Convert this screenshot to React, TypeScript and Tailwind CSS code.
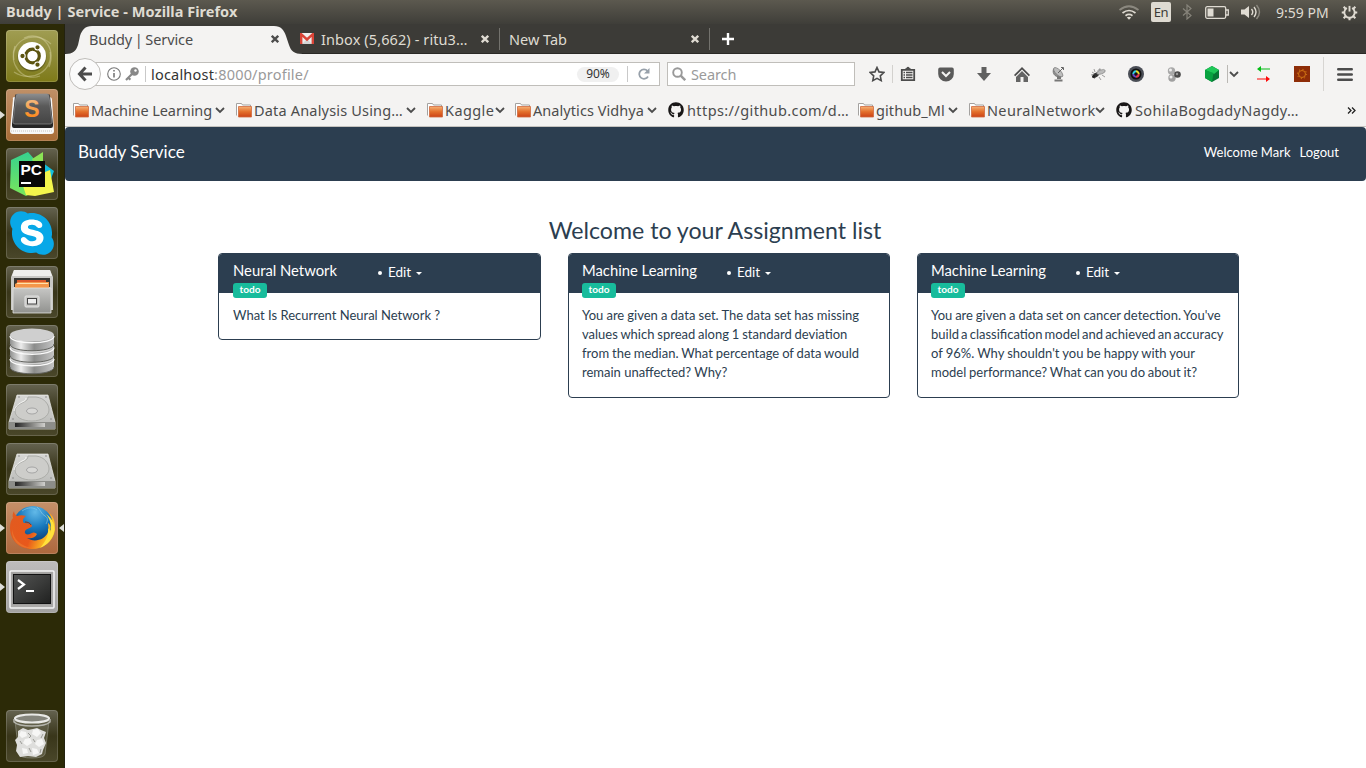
import React from "react";
import { FaGithub, FaSkype } from "react-icons/fa";

const ui = "font-['Noto_Sans','Open_Sans',sans-serif]";

/* ---------- launcher artwork, all on a 52x52 grid ---------- */

function UbuntuArt() {
  return (
    <svg viewBox="0 0 52 52" className="size-full">
      <g fill="none" stroke="#e0dcae" strokeOpacity=".4" strokeWidth="1.3">
        <path d="M8 30C4 12 26-2 45 14" />
        <path d="M18 8c17-8 33 9 25 29" />
        <path d="M44 22c4 18-18 32-36 20" />
        <path d="M34 46C16 52 2 34 9 16" />
      </g>
      <circle cx="26" cy="27" r="14.5" fill="#000" opacity=".25" />
      <circle cx="26" cy="26" r="14" fill="#fff" />
      <circle cx="26.5" cy="26" r="6.8" fill="none" stroke="#5c5410" strokeWidth="3.2" />
      <g fill="#5c5410" stroke="#fff" strokeWidth="1.1">
        <circle cx="16.5" cy="26" r="2.7" />
        <circle cx="31.5" cy="17.3" r="2.7" />
        <circle cx="31.5" cy="34.7" r="2.7" />
      </g>
    </svg>
  );
}

function SublimeArt() {
  return (
    <svg viewBox="0 0 52 52" className="size-full">
      <defs>
        <linearGradient id="subTop" x2="0" y2="1">
          <stop offset="0" stopColor="#8b8d8f" />
          <stop offset=".4" stopColor="#5a5a5a" />
          <stop offset="1" stopColor="#444" />
        </linearGradient>
        <linearGradient id="subS" x2="0" y2="1">
          <stop offset=".2" stopColor="#f4b678" />
          <stop offset="1" stopColor="#ff7d05" />
        </linearGradient>
      </defs>
      <path d="M7 10q-1-2 2-2h34q3 0 3 3l2 31q0 3-3 3H7q-3 0-3-3z" fill="#f7f7f7" />
      <path d="M5 42h42" stroke="#c5c2be" strokeDasharray="1 1" />
      <path d="M9 7q0-2 2-2h31q2 0 2 2l3 28v2q0 2-2 2H8q-2 0-2-2v-2z" fill="#252525" />
      <path d="M10 7q0-2 2-2h29q2 0 2 2l3 26q0 2-2 2H9q-2 0-2-2z" fill="url(#subTop)" stroke="#8c8d8e" strokeWidth=".7" />
      <text x="26" y="27.5" textAnchor="middle" fontFamily="Liberation Sans" fontWeight="700" fontSize="23" fill="url(#subS)">S</text>
    </svg>
  );
}

function PyCharmArt() {
  return (
    <svg viewBox="0 0 52 52" className="size-full">
      <defs>
        <linearGradient id="pcA" x2="0" y2="1"><stop offset="0" stopColor="#35d08f" /><stop offset="1" stopColor="#7ae65b" /></linearGradient>
      </defs>
      <path d="m5 12 17-8 8 9-6 33-4 2-16-8z" fill="url(#pcA)" />
      <path d="m26 11 11-7v12l-8 3z" fill="#8be455" />
      <path d="m37 15 11 8-5 13-9-3z" fill="#13bfdd" />
      <path d="m39 24 5-2 4 22-19 4-9-1-3-9z" fill="#f3f64c" />
      <rect x="13" y="13" width="26" height="26" fill="#080808" />
      <text x="14.5" y="27" fontFamily="Liberation Sans" fontWeight="700" fontSize="15.5" textLength="21.5" lengthAdjust="spacingAndGlyphs" fill="#fff">PC</text>
      <path d="M15 35h10" stroke="#fff" strokeWidth="2" />
    </svg>
  );
}

function SkypeArt() {
  return (
    <div className="relative size-full">
      <div className="absolute top-2 left-3 h-[36px] w-[30px] rounded-full bg-white" />
      <FaSkype className="absolute top-[1px] left-[1px] size-[50px] text-[#08a8e8]" />
    </div>
  );
}

function FilesArt() {
  return (
    <svg viewBox="0 0 52 52" className="size-full">
      <defs>
        <linearGradient id="cab" x2="0" y2="1">
          <stop offset="0" stopColor="#c6c6c4" />
          <stop offset="1" stopColor="#91928f" />
        </linearGradient>
      </defs>
      <path d="M8 4h36l3 7v33H5V11z" fill="#c9c9c6" />
      <path d="M8 4h36l2 6H6z" fill="#efefed" />
      <path d="M8 12h36v9H8z" fill="#383834" />
      <path d="M11 14h29v7H11z" fill="#dd5a2d" />
      <path d="M12 16h31v6H9v-4z" fill="#f4964a" />
      <path d="M11 17.5h31" stroke="#ffe1ae" />
      <path d="M7 22h38v25H7z" fill="url(#cab)" stroke="#e5e5e2" strokeWidth=".8" />
      <rect x="19" y="30" width="14" height="11" rx="1" fill="#c7c7c4" stroke="#e4e4e4" />
      <rect x="21.5" y="32.5" width="9" height="5.5" fill="#eee" stroke="#444" />
    </svg>
  );
}

function DatabaseArt() {
  return (
    <svg viewBox="0 0 52 52" className="size-full">
      <defs>
        <linearGradient id="dbg">
          <stop offset="0" stopColor="#8f908f" />
          <stop offset=".25" stopColor="#ececec" />
          <stop offset=".55" stopColor="#8b8c8b" />
          <stop offset="1" stopColor="#c4c4c4" />
        </linearGradient>
      </defs>
      {[33, 21.5, 10].map((y) => (
        <g key={y}>
          <path d={`M4 ${y}v9c0 9 44 9 44 0V${y}z`} fill="url(#dbg)" />
          <path d={`M4 ${y + 9}c0 9 44 9 44 0`} fill="none" stroke="#62635f" strokeWidth="1" />
          <path d={`M4 ${y + 1}c0 9 44 9 44 0`} fill="none" stroke="#fafafa" strokeWidth="1.3" />
          <ellipse cx="26" cy={y} rx="22" ry="6.5" fill="#cfcfcf" />
        </g>
      ))}
    </svg>
  );
}

function DiskArt() {
  return (
    <svg viewBox="0 0 52 52" className="size-full">
      <defs>
        <linearGradient id="disk" x2="0" y2="1">
          <stop offset="0" stopColor="#d7d7d5" />
          <stop offset="1" stopColor="#b8b9b6" />
        </linearGradient>
        <linearGradient id="diskFront">
          <stop offset="0" stopColor="#222" />
          <stop offset=".6" stopColor="#8b8b88" />
          <stop offset="1" stopColor="#d0d0cd" />
        </linearGradient>
      </defs>
      <path d="M11 11h31l7 27v7H3v-7z" fill="url(#disk)" stroke="#edede9" strokeWidth=".7" />
      <path d="M3 38h46v7H3z" fill="#8c8d89" />
      <path d="M9 39h30v4H9z" fill="url(#diskFront)" />
      <path d="M22 13h8c9 1 13 8 13 13 0 6-7 11-17 11S9 33 9 27c0-5 5-7 9-9 2-1 4-2 4-5z" fill="#cdcdca" stroke="#a7a8a4" strokeWidth=".9" />
      <path d="M20 14c0 2-1 3-4 4-5 3-7 5-8 9" fill="none" stroke="#f6f6f4" />
      <ellipse cx="26" cy="27" rx="5.5" ry="3" fill="#d8d8d6" stroke="#999" strokeWidth=".8" />
      <g fill="#777"><circle cx="13" cy="13" r=".7" /><circle cx="40" cy="13" r=".7" /><circle cx="7" cy="35" r=".7" /><circle cx="45" cy="35" r=".7" /></g>
    </svg>
  );
}

function FirefoxArt() {
  return (
    <svg viewBox="0 0 52 52" className="size-full">
      <defs>
        <radialGradient id="globe" cx=".55" cy=".15" r=".8">
          <stop offset="0" stopColor="#62b9e8" />
          <stop offset=".5" stopColor="#1779bd" />
          <stop offset="1" stopColor="#0a356f" />
        </radialGradient>
        <linearGradient id="fox" x2="1" y2=".3">
          <stop offset="0" stopColor="#e15b20" />
          <stop offset=".6" stopColor="#e8581b" />
          <stop offset="1" stopColor="#ffcf24" />
        </linearGradient>
      </defs>
      <circle cx="27" cy="24" r="20" fill="url(#globe)" />
      <path d="M31 5c4 3 4 7 8 9s2 6 1 8M16 9c6-4 11-4 15-1" stroke="#a6d9ee" strokeWidth="1" fill="none" opacity=".5" />
      <path d="M8 9c0 3 2 4 3 5 3-1 6-1 9 0-3 2-4 5-2 7 4 0 8 1 8 3-1 2-5 2-7 5-1 3 2 4 5 3 3-2 5-2 7 0-2 4-6 5-10 4 7 5 18 2 21-6 1-3 0-6 0-9 3 2 3 5 2 8 4-5 3-14-2-19 6 4 7 9 7 18-2 12-12 19-23 19C13 47 4 38 4 26c0-5 1-8 3-10-1-3 0-5 1-7z" fill="url(#fox)" />
      <path d="M40 12c7 5 9 11 8 18-2 8-7 13-14 16 6-7 9-13 8-20 2 2 3 5 2 7 2-8 1-15-4-21z" fill="#ffe13c" />
      <path d="M6 27c1 10 9 17 19 19C13 47 5 38 6 27z" fill="#ef8133" opacity=".6" />
      <path d="M19 20c3 0 5 1 6 3" stroke="#8e3016" fill="none" />
    </svg>
  );
}

function TerminalArt() {
  return (
    <svg viewBox="0 0 52 52" className="size-full">
      <defs>
        <linearGradient id="term" x2="1" y2="1">
          <stop offset="0" stopColor="#525352" />
          <stop offset=".5" stopColor="#3b3c3b" />
          <stop offset="1" stopColor="#202120" />
        </linearGradient>
      </defs>
      <rect x="4" y="10" width="44" height="37" rx="1" fill="#aaa9a7" stroke="#f4f4f4" strokeWidth="1.5" />
      <rect x="5.5" y="11.5" width="41" height="32.5" fill="#a2a19f" />
      <rect x="7.5" y="13.5" width="37" height="29" fill="url(#term)" stroke="#111" />
      <path d="m12 19 6 4.5-6 4.5M20 30h8" stroke="#fff" strokeWidth="2.2" fill="none" />
    </svg>
  );
}

function TrashArt() {
  return (
    <svg viewBox="0 0 52 52" className="size-full">
      <path d="m9 11 4 33q1 4 13 4t13-4l4-33z" fill="#b9b9a9" fillOpacity=".2" stroke="#8d8d7e" strokeWidth=".7" />
      <path d="m12 21 5-3 5 2 5-1 4-1 4 2 5 2-2 6 2 5-3 7-1 4-6 3-8-1-8 1-4-6 1-6-2-5 3-3z" fill="#dededc" />
      <g fill="#f6f6f5">
        <path d="m15 21 5 1 1 4-5 2-3-3zM27 20l5-1 3 4-4 4-5-3zM19 29l5-1 2 5-5 3-4-3zM31 30l5-1 2 5-5 3-4-3zM16 38l5 1 1 4-5 1zM26 38l5 1 2 4-6 2z" />
      </g>
      <path d="m22 23 3 3-2 2M37 24l-2 4M14 31l2 3M27 29l2 3M23 38l2 4M35 39l-1 4" stroke="#9b9b96" fill="none" />
      <ellipse cx="26" cy="8.5" rx="17" ry="4" fill="#85857c" stroke="#e9e9e6" strokeWidth="2.2" />
      <path d="M8 9v3q4 4 18 4t18-4V9" fill="none" stroke="#b5b5ad" strokeWidth="1.5" />
    </svg>
  );
}

const glass = "bg-linear-to-b from-[#656350] via-[#39361a] to-[#4a472a]";

const launcher = [
  { name: "Dash", art: <UbuntuArt />, tile: "bg-linear-to-b from-[#a09d52] to-[#7e7a17]", running: false },
  { name: "Sublime Text", art: <SublimeArt />, tile: "bg-linear-to-b from-[#bf9067] to-[#a86c35]", running: true },
  { name: "PyCharm", art: <PyCharmArt />, tile: glass, running: false },
  { name: "Skype", art: <SkypeArt />, tile: glass, running: false },
  { name: "Files", art: <FilesArt />, tile: glass, running: false },
  { name: "Database", art: <DatabaseArt />, tile: glass, running: false },
  { name: "Disk", art: <DiskArt />, tile: glass, running: false },
  { name: "Disk 2", art: <DiskArt />, tile: glass, running: false },
  { name: "Firefox", art: <FirefoxArt />, tile: "bg-linear-to-b from-[#c59069] to-[#ad683d]", running: true },
  { name: "Terminal", art: <TerminalArt />, tile: "bg-linear-to-b from-[#bebcbb] to-[#a3a2a1]", running: true },
];

function Tile({ art, tile, running, focused }: { art: React.ReactNode; tile: string; running?: boolean; focused?: boolean }) {
  return (
    <div className="relative flex h-[52px] justify-center">
      <div className={`ml-[-1px] size-[52px] overflow-hidden rounded-[4px] shadow-[inset_0_0_0_1px_rgba(255,255,255,0.16)] ${tile}`}>{art}</div>
      {running && (
        <svg viewBox="0 0 5 8" className="absolute top-[22px] left-0 h-2 w-[5px] fill-[#deded8]"><path d="m0 0 5 4-5 4z" /></svg>
      )}
      {focused && (
        <svg viewBox="0 0 5 8" className="absolute top-[22px] right-0 h-2 w-[5px] fill-[#deded8]"><path d="M5 0 0 4l5 4z" /></svg>
      )}
    </div>
  );
}

function Launcher() {
  return (
    <aside className="flex w-[65px] shrink-0 flex-col justify-between border-r border-[#23220f] bg-[#2c2a07] pt-1.5 pb-1.5">
      <div className="flex flex-col gap-[7px]">
        {launcher.map((l) => (
          <Tile key={l.name} art={l.art} tile={l.tile} running={l.running} focused={l.name === "Firefox"} />
        ))}
      </div>
      <Tile art={<TrashArt />} tile={glass} />
    </aside>
  );
}

/* ---------- system bar ---------- */

function SystemBar() {
  return (
    <header className="flex h-6 shrink-0 items-center justify-between bg-linear-to-b from-[#5c594f] to-[#3f3e39] pl-1.5 text-[#dfdbd2]">
      <span className="text-[14.5px] font-bold tracking-[0.03px]">Buddy | Service - Mozilla Firefox</span>
      <div className="flex w-[248px] items-center">
        <svg viewBox="0 0 22 16" className="mr-[11px] h-4 w-[22px] shrink-0" fill="none" strokeWidth="1.7">
          <path d="M1.5 6q9.5-7.5 19 0" stroke="#8b887f" />
          <path d="M4.5 9q6.5-5 13 0M7.5 11.7q3.5-2.6 7 0" stroke="#dfdbd2" />
          <path d="m8.8 13.5 2.2 2.3 2.2-2.3q-2.2-1.5-4.4 0z" fill="#dfdbd2" />
        </svg>
        <span className="flex h-5 w-5 shrink-0 items-center justify-center rounded-[2px] bg-[#dfdbd2] text-[13px] text-[#3c3b37]">
          <span className="pt-0.5 tracking-[-0.5px]">En</span>
        </span>
        <svg viewBox="0 0 10 16" className="ml-[11px] h-4 w-2.5 shrink-0" fill="none" stroke="#87847b" strokeWidth="1.2">
          <path d="m1 4.5 8 7-4 3.5V1l4 3.5-8 7" />
        </svg>
        <svg viewBox="0 0 24 13" className="ml-[13px] h-[13px] w-6 shrink-0" fill="none" stroke="#dfdbd2" strokeWidth="1.3">
          <rect x=".7" y=".7" width="20" height="11.6" rx="1.5" />
          <path d="M21 4h2.3v5H21" />
          <path d="M2.5 2.5h6v8h-6z" fill="#dfdbd2" stroke="none" />
        </svg>
        <svg viewBox="0 0 20 16" className="ml-3 h-4 w-5 shrink-0" fill="none" strokeWidth="1.4">
          <path d="M0 5.5h3.5L8 2v12l-4.5-3.5H0z" fill="#dfdbd2" />
          <path d="M10.5 5q2.5 3 0 6M13 3q4 5 0 10" stroke="#dfdbd2" />
          <path d="M15.5 1q6 7 0 14" stroke="#8b887f" />
        </svg>
        <span className="ml-[15px] w-[54px] shrink-0 text-[14px] whitespace-nowrap">9:59 PM</span>
        <svg viewBox="0 0 18 18" className="ml-[11px] size-[17px] shrink-0" fill="none" stroke="#dfdbd2">
          <path d="M6.200 4.300a5.500 5.500 0 1 0 5.600 0" strokeWidth="2" />
          <path d="M9 2v6" strokeWidth="2" />
          <path d="M2.800 2.800 5.500 5.500M.8 9h3M2.800 15.200l2.700-2.700M9 17.200v-3M15.200 15.200l-2.700-2.700M17.200 9h-3M15.200 2.800l-2.700 2.700" strokeWidth="2.2" />
        </svg>
      </div>
    </header>
  );
}

/* ---------- browser chrome ---------- */

function Close({ className }: { className: string }) {
  return (
    <svg viewBox="0 0 8 8" className={`size-2 shrink-0 ${className}`} stroke="currentColor" strokeWidth="2.3">
      <path d="m.8.8 6.400 6.400M7.200.8.8 7.200" />
    </svg>
  );
}

function TabBar() {
  return (
    <div className="relative flex h-[30px] shrink-0 items-center border-b border-[#2a2926] bg-[#3c3b37] text-[14.5px] text-[#dfdbd2]">
      <svg viewBox="0 0 240 28" className="absolute top-0.5 left-0 h-7 w-60">
        <path d="M0 28c8 0 11-3 13-9l2-9C17 4 20 0 27 0h182c7 0 10 4 12 10l3 9c2 6 5 9 14 9z" fill="#f4f3f2" />
      </svg>
      <div className="relative flex w-[227px] items-center pl-6 text-[#4c4c4c]">
        <span className="w-[182px] pt-0.5 tracking-[-0.1px] whitespace-nowrap [word-spacing:-1px]">Buddy | Service</span>
        <Close className="text-[#4c4c4c]" />
      </div>
      <div className="flex h-[22px] w-[208px] items-center border-r border-[#73726d] pl-2">
        <svg viewBox="0 0 14 11" className="h-[11px] w-3.5 shrink-0">
          <path d="M0 0h14v11H0z" fill="#efefef" />
          <path d="M2 11 7 6l5 5z" fill="#d5d5d5" />
          <path d="M1.200 11V1.200L7 6.500l5.800-5.300V11" fill="none" stroke="#da4437" strokeWidth="2.4" />
        </svg>
        <span className="ml-[7px] w-[160px] pt-0.5 tracking-[0.1px] whitespace-nowrap">Inbox (5,662) - ritu3…</span>
        <Close className="text-[#dfdbd2]" />
      </div>
      <div className="flex h-[22px] w-[210px] items-center border-r border-[#73726d] pl-[9px]">
        <span className="w-[182px] pt-0.5 whitespace-nowrap">New Tab</span>
        <Close className="text-[#dfdbd2]" />
      </div>
      <svg viewBox="0 0 12 12" className="ml-3 size-3" stroke="#fff" strokeWidth="2.4"><path d="M6 0v12M0 6h12" /></svg>
    </div>
  );
}

function Chevron({ className = "" }: { className?: string }) {
  return (
    <svg viewBox="0 0 10 7" className={`h-[7px] w-2.5 shrink-0 ${className}`} fill="none" stroke="#4c4c4c" strokeWidth="1.8">
      <path d="m1 1 4 4 4-4" />
    </svg>
  );
}

function Cell({ children }: { children: React.ReactNode }) {
  return <div className="flex w-[38px] shrink-0 justify-center">{children}</div>;
}

function ToolIcons() {
  return (
    <>
      <div className="flex w-8 shrink-0 justify-center pl-0.5">
        <svg viewBox="0 0 16 16" className="size-4" fill="none" stroke="#4c4c4c" strokeWidth="1.6">
          <path d="m8 1.500 2 4.400 4.800.6-3.500 3.300.9 4.800L8 12.300l-4.200 2.300.9-4.800L1.200 6.500 6 5.900z" />
        </svg>
      </div>
      <div className="h-[18px] w-px bg-[#d3d1ce]" />
      <div className="flex w-[34px] shrink-0 justify-center">
        <svg viewBox="0 0 16 16" className="ml-[-4px] size-4" fill="none" stroke="#4c4c4c">
          <path d="M1.800 3.800h12.400v10.400H1.800z" strokeWidth="1.8" />
          <path d="M5 3.500 8 1l3 2.500z" fill="#4c4c4c" />
          <path d="M3.500 6.500H5M6 6.500h6.500M3.500 9H5M6 9h6.500M3.500 11.500H5M6 11.500h6.500" strokeWidth="1.3" />
        </svg>
      </div>
      <Cell>
        <svg viewBox="0 0 16 15" className="h-[15px] w-4">
          <path d="M2 .5h12q1.800 0 1.800 2V7a7.800 7.500 0 0 1-15.600 0V2.500Q.2.500 2 .5z" fill="#5a5a5a" />
          <path d="m4 5 4 4 4-4" fill="none" stroke="#f4f3f2" strokeWidth="2" />
        </svg>
      </Cell>
      <Cell><svg viewBox="0 0 14 14" className="size-3.5" fill="#606060"><path d="M4.500 0h5v6H14l-7 8-7-8h4.500z" /></svg></Cell>
      <Cell><svg viewBox="0 0 16 15" className="h-[15px] w-4" fill="#4c4c4c"><path d="m8 0 8 8-1.200 1.200L8 2.500 1.200 9.200 0 8z" /><path d="m8 4 6 6v5H9.500v-5h-3v5H2v-5z" fill="#646464" /></svg></Cell>
      <Cell>
        <svg viewBox="0 0 14 16" className="mr-0.5 h-4 w-3.5">
          <path d="M1.500 3c-2 5 3 10 9 7z" fill="#8f8f8f" stroke="#666" strokeWidth=".6" />
          <ellipse cx="6.200" cy="6.200" rx="2.600" ry="6" transform="rotate(-45 6.200 6.200)" fill="#bdbdbd" stroke="#777" strokeWidth=".7" />
          <path d="m6 7 5-5M9 1.500h2.500V4" stroke="#666" fill="none" />
          <path d="M5 10v4h4v-3M2.500 13.500h8v2h-8z" fill="#777" />
        </svg>
      </Cell>
      <Cell>
        <svg viewBox="0 0 16 14" className="h-3.5 w-4">
          <path d="m2 5 3 2-4 1M4 12l2-3M9 10l2 3M12 8l3 2M5 5 4 2" stroke="#777" strokeWidth=".7" fill="none" />
          <ellipse cx="6" cy="8" rx="3.500" ry="2" transform="rotate(-35 6 8)" fill="#333" />
          <ellipse cx="11" cy="5" rx="4.500" ry="2" transform="rotate(-20 11 5)" fill="#bbb" stroke="#777" strokeWidth=".5" />
          <circle cx="3.500" cy="9.500" r="1.500" fill="#222" />
          <path d="m7 4 3-3 1 2z" fill="#999" />
        </svg>
      </Cell>
      <Cell>
        <svg viewBox="0 0 16 16" className="size-4">
          <circle cx="8" cy="8" r="8" fill="#4a4e56" /><circle cx="8" cy="8" r="5.500" fill="#111" />
          <g fill="none" strokeWidth="2">
            <path d="M5.300 8A2.700 2.700 0 0 1 8 5.300" stroke="#2fd1e3" />
            <path d="M8 5.300A2.700 2.700 0 0 1 10.700 8" stroke="#e1df2d" />
            <path d="M10.700 8A2.700 2.700 0 0 1 8 10.700" stroke="#e63b50" />
            <path d="M8 10.700A2.700 2.700 0 0 1 5.300 8" stroke="#6747c4" />
          </g>
        </svg>
      </Cell>
      <Cell>
        <svg viewBox="0 0 14 15" className="h-[15px] w-3.5">
          <circle cx="4.500" cy="4" r="3.700" fill="#a9a9a9" /><circle cx="3.500" cy="3" r="1.500" fill="#eee" />
          <circle cx="5" cy="11" r="3.700" fill="#a0a0a0" /><circle cx="4" cy="10" r="1.500" fill="#eee" />
          <circle cx="10.500" cy="7.500" r="3.300" fill="#4b4b4b" /><circle cx="10" cy="7" r="1.200" fill="#999" />
        </svg>
      </Cell>
      <Cell>
        <svg viewBox="0 0 14 16" className="h-4 w-3.5"><path d="m7 0 7 4v8l-7 4-7-4V4z" fill="#087735" /><path d="m7 0 7 4-5 4-9-4z" fill="#1fc758" /><path d="m0 4 8.500 3L7 16l-7-4z" fill="#08a240" /></svg>
      </Cell>
      <div className="ml-[-4px] h-[18px] w-px shrink-0 bg-[#bab8b4]" />
      <Chevron className="ml-[1px]" />
      <div className="flex w-[48px] shrink-0 justify-center">
        <svg viewBox="0 0 13 16" className="h-4 w-[13px]"><path d="M13 2.400v1.200H4V6L0 3l4-3v2.400z" fill="#04bd17" /><path d="M0 12.400v1.200h9V16l4-3-4-3v2.400z" fill="#fc0909" /></svg>
      </div>
      <div className="flex w-[29px] shrink-0 justify-center">
        <svg viewBox="0 0 16 16" className="size-4"><path d="M0 0h16v16H0z" fill="#8e2d08" /><circle cx="8" cy="8" r="3.500" fill="none" stroke="#df8517" strokeWidth=".8" /><circle cx="8" cy="8" r="4.600" fill="none" stroke="#df8517" strokeWidth="1" strokeDasharray="1 2.610" /></svg>
      </div>
      <div className="ml-[7px] h-[34px] w-px shrink-0 bg-[#d7d5d2]" />
      <svg viewBox="0 0 16 13" className="ml-[13px] h-[13px] w-4 shrink-0" stroke="#4c4c4c" strokeWidth="2.6" strokeLinecap="round"><path d="M1.300 1.300h13.400M1.300 6.500h13.400M1.300 11.700h13.400" /></svg>
    </>
  );
}

function NavBar() {
  return (
    <div className="flex h-10 shrink-0 items-center bg-[#f4f3f2] pl-1">
      <div className="z-10 flex size-[32px] shrink-0 items-center justify-center rounded-full border border-[#bfbdba] bg-[#fbfbfb]">
        <svg viewBox="0 0 16 16" className="size-4" fill="none" stroke="#4c4c4c" strokeWidth="3"><path d="M8.500 1.500 2.500 8l6 6.500M3 8h12" /></svg>
      </div>
      <div className="ml-[-16px] flex h-6 w-[575px] shrink-0 items-center border border-[#c0beba] bg-white pl-[21px]">
        <svg viewBox="0 0 14 14" className="size-3.5 shrink-0" fill="none" stroke="#777" strokeWidth="1.1"><circle cx="7" cy="7" r="6.300" /><path d="M7 6v4.500M7 3v1.500" strokeWidth="1.6" /></svg>
        <svg viewBox="0 0 14 14" className="ml-1 size-3.5 shrink-0" fill="none"><circle cx="9.500" cy="4.500" r="4.300" fill="#888" /><circle cx="10.500" cy="3.500" r="1.200" fill="#fff" /><path d="m7 7-6 6M4 11.500l1.500 1.200" stroke="#888" strokeWidth="2.2" /></svg>
        <div className="ml-[6px] h-4 w-px shrink-0 bg-[#c9c9c9]" />
        <span className="ml-[5px] w-[426px] shrink-0 pt-0.5 text-[14.5px] tracking-[0.2px] whitespace-nowrap text-[#9a9a9a]"><span className="text-[#333]">localhost</span>:8000/profile/</span>
        <span className="flex h-[15px] w-[42px] shrink-0 items-center justify-center rounded-full bg-[#f0f0f0] text-[12px] text-[#333]">90%</span>
        <div className="ml-2 h-4 w-px shrink-0 bg-[#c9c9c9]" />
        <svg viewBox="0 0 12 12" className="ml-[10px] size-3 shrink-0" fill="none" stroke="#97a0aa" strokeWidth="1.8"><path d="M10 8.500A4.700 4.700 0 1 1 9.500 3" /><path d="M11.500 0v5.500H6z" fill="#97a0aa" stroke="none" /></svg>
      </div>
      <div className="ml-[7px] flex h-6 w-[188px] shrink-0 items-center border border-[#c0beba] bg-white pl-1">
        <svg viewBox="0 0 14 14" className="size-3.5 shrink-0" fill="none" stroke="#999" strokeWidth="1.9"><circle cx="5.500" cy="5.500" r="4.300" /><path d="m8.700 8.700 4.500 4.500" strokeWidth="2.4" /></svg>
        <span className="ml-[5px] pt-0.5 text-[14.5px] tracking-[-0.1px] text-[#9a9a9a]">Search</span>
      </div>
      <div className="flex w-[505px] shrink-0 items-center pl-[5px]"><ToolIcons /></div>
    </div>
  );
}

function Folder() {
  return (
    <svg viewBox="0 0 17 15" className="mr-[1px] h-[15px] w-[17px] shrink-0">
      <defs><linearGradient id="fold" x2="0" y2="1"><stop offset="0" stopColor="#f6b175" /><stop offset=".5" stopColor="#e36f2b" /><stop offset="1" stopColor="#cc4216" /></linearGradient></defs>
      <path d="M.5 12.500V.5h5l1 1.500h8v2" fill="#fff" stroke="#a4a2a0" />
      <path d="M2.500 3.500h13v10.500h-13z" fill="url(#fold)" stroke="#d0693f" strokeWidth=".8" />
    </svg>
  );
}

const bookmarks = [
  { label: "Machine Learning", kind: "folder", cell: "w-[163px]", text: "w-[124px] tracking-[-0.08px]" },
  { label: "Data Analysis Using…", kind: "folder", cell: "w-[191px]", text: "w-[152px] tracking-[0.18px]" },
  { label: "Kaggle", kind: "folder", cell: "w-[88px]", text: "w-[50px] tracking-[0.4px]" },
  { label: "Analytics Vidhya", kind: "folder", cell: "w-[153px]", text: "w-[114px] tracking-[0.06px]" },
  { label: "https://github.com/d…", kind: "github", cell: "w-[190px]", text: "w-[170px] tracking-[0.4px]" },
  { label: "github_Ml", kind: "folder", cell: "w-[111px]", text: "w-[72px] tracking-[0.1px]" },
  { label: "NeuralNetwork", kind: "folder", cell: "w-[147px]", text: "w-[108px] tracking-[0.35px]" },
  { label: "SohilaBogdadyNagdy…", kind: "github", cell: "w-[231px]", text: "w-[190px] tracking-[0.35px]" },
];

function Bookmarks() {
  return (
    <div className="flex h-[33px] shrink-0 items-center border-b border-[#c5c3bf] bg-[#f4f3f2] pl-2 text-[14.5px] text-[#4c4c4c]">
      {bookmarks.map((b) => (
        <div key={b.label} className={`flex shrink-0 items-center ${b.cell}`}>
          {b.kind === "folder" ? <Folder /> : <FaGithub className="mr-[3px] size-4 shrink-0 text-[#191717]" />}
          <span className={`shrink-0 pt-0.5 whitespace-nowrap ${b.text}`}>{b.label}</span>
          {b.kind === "folder" && <Chevron />}
        </div>
      ))}
      <svg viewBox="0 0 9 7" className="h-[7px] w-[9px] shrink-0" fill="none" stroke="#222" strokeWidth="1.3"><path d="m1 .5 3 3-3 3M5 .5l3 3-3 3" /></svg>
    </div>
  );
}

/* ---------- page ---------- */

type Line = [text: string, spacing: string];

const cards: { title: string; width: string; inset: string; lines: Line[] }[] = [
  { title: "Neural Network", width: "w-[323px]", inset: "pl-3.5", lines: [["What Is Recurrent Neural Network ?", "[word-spacing:0px]"]] },
  {
    title: "Machine Learning",
    width: "w-[322px]",
    inset: "pl-[13px]",
    lines: [
      ["You are given a data set. The data set has missing", "[word-spacing:-0.2px]"],
      ["values which spread along 1 standard deviation", "[word-spacing:-0.5px]"],
      ["from the median. What percentage of data would", "[word-spacing:-0.4px]"],
      ["remain unaffected? Why?", "[word-spacing:0px]"],
    ],
  },
  {
    title: "Machine Learning",
    width: "w-[322px]",
    inset: "pl-[13px]",
    lines: [
      ["You are given a data set on cancer detection. You've", "[word-spacing:-0.5px]"],
      ["build a classification model and achieved an accuracy", "[word-spacing:-1.2px]"],
      ["of 96%. Why shouldn't you be happy with your", "[word-spacing:-0.2px]"],
      ["model performance? What can you do about it?", "[word-spacing:-0.6px]"],
    ],
  },
];

function Card({ title, width, inset, lines }: (typeof cards)[number]) {
  return (
    <article className={`shrink-0 overflow-hidden rounded-[4px] border border-[#2c3e50] bg-white ${width}`}>
      <div className={`flex h-[39px] bg-[#2c3e50] text-white ${inset}`}>
        <div className="w-[145px] shrink-0">
          <h2 className="mt-[6px] h-[23px] text-[14.8px] leading-5 whitespace-nowrap">{title}</h2>
          <span className="relative flex h-[15px] w-[34px] items-center justify-center rounded-[3px] bg-[#18bc9c] pb-px text-[10.1px] font-bold">todo</span>
        </div>
        <div className="mt-2 flex h-5 items-center text-[13.5px]">
          <span className="mt-0.5 mr-1.5 size-1 rounded-full bg-white" />
          <span>Edit</span>
          <span className="mt-0.5 ml-[5px] border-x-[3.5px] border-t-[3.5px] border-x-transparent border-t-white" />
        </div>
      </div>
      <div className={`pt-[13px] text-[13px] leading-[19px] text-[#2c3e50] ${inset} ${lines.length > 1 ? "pb-[15px]" : "pb-[14px]"}`}>
        {lines.map(([text, spacing]) => <p key={text} className={`whitespace-nowrap ${spacing}`}>{text}</p>)}
      </div>
    </article>
  );
}

function Page() {
  return (
    <main className="flex-1 bg-white font-['Lato',sans-serif] text-[#2c3e50]">
      <nav className="flex h-[54px] items-center justify-between rounded-[4px] bg-[#2c3e50] pr-[27px] pb-1 pl-[13px] text-white">
        <span className="text-[17.1px]">Buddy Service</span>
        <div className="flex gap-[9px] pt-0.5 text-[13px]"><span>Welcome Mark</span><span>Logout</span></div>
      </nav>
      <h1 className="mt-[34px] pr-px text-center text-[23.15px] leading-[30px]">Welcome to your Assignment list</h1>
      <section className="mt-2 ml-[153px] flex items-start gap-[27px]">
        {cards.map((c, i) => <Card key={i} {...c} />)}
      </section>
    </main>
  );
}

export default function App() {
  return (
    <div className={`flex h-[768px] w-[1366px] flex-col overflow-hidden ${ui}`}>
      <SystemBar />
      <div className="flex min-h-0 flex-1">
        <Launcher />
        <div className="flex min-w-0 flex-1 flex-col">
          <TabBar />
          <NavBar />
          <Bookmarks />
          <Page />
        </div>
      </div>
    </div>
  );
}
